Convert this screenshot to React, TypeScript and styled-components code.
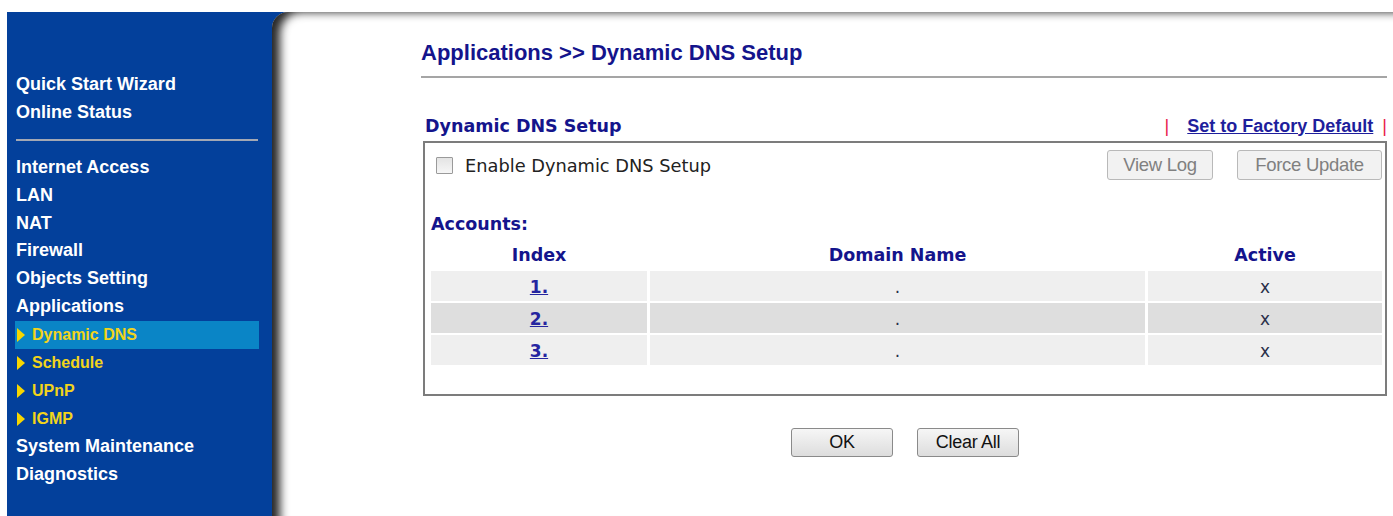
import styled, { createGlobalStyle } from "styled-components";

const GlobalStyle = createGlobalStyle`
  html, body {
    margin: 0;
    padding: 0;
    background: #fff;
  }
  body {
    font-family: "Liberation Sans", Arial, sans-serif;
  }
`;

const Page = styled.div`
  height: 516px;
  box-sizing: border-box;
  padding: 12px 0 0 7px;
  overflow: hidden;
`;

const Frame = styled.div`
  display: flex;
  height: 100%;
  background: #03409b;
`;

const Sidebar = styled.nav`
  width: 265px;
  flex-shrink: 0;
  box-sizing: border-box;
  padding: 59px 13px 0 8px;
  display: flex;
  flex-direction: column;
`;

const MenuItem = styled.div`
  height: 27.9px;
  line-height: 27.9px;
  padding-left: 1px;
  color: #fff;
  font-size: 18px;
  font-weight: bold;
  white-space: nowrap;
`;

const SubItem = styled.div<{ $active?: boolean }>`
  height: 27.9px;
  display: flex;
  align-items: center;
  gap: 7px;
  padding-left: 2px;
  color: #f2d41a;
  font-size: 16px;
  font-weight: bold;
  background: ${(p) => (p.$active ? "#0a85c6" : "transparent")};
`;

const Arrow = styled.span`
  width: 0;
  height: 0;
  border-top: 7px solid transparent;
  border-bottom: 7px solid transparent;
  border-left: 8px solid #f7d600;
`;

const Divider = styled.div`
  height: 2px;
  margin: 12px 1px 13px 1px;
  background: #a3a8b4;
`;

const Content = styled.main`
  flex: 1;
  background: #fff;
  border-top-left-radius: 16px;
  box-shadow: inset 13px 5px 10px -5px rgba(0, 0, 0, 0.85);
  box-sizing: border-box;
  padding: 28px 6px 0 149px;
`;

const Title = styled.h1`
  margin: 0;
  font-size: 22px;
  line-height: 26px;
  font-weight: bold;
  color: #14148c;
`;

const Rule = styled.div`
  height: 2px;
  margin-top: 10px;
  background: #a5a5a5;
`;

const SectionHead = styled.div`
  margin-top: 37px;
  height: 22px;
  display: flex;
  align-items: center;
  justify-content: space-between;
`;

const SectionTitle = styled.span`
  padding-left: 4px;
  font-family: "DejaVu Sans", Verdana, sans-serif;
  font-size: 17.5px;
  font-weight: bold;
  color: #14148c;
`;

const Links = styled.span`
  display: flex;
  align-items: center;
  font-size: 18px;
  font-weight: bold;
`;

const Pipe = styled.span`
  color: #e8174a;
  font-weight: normal;
`;

const Link = styled.a`
  color: #1e1e9c;
  text-decoration: underline;
  margin-left: 18px;
  margin-right: 9px;
`;

const Box = styled.section`
  margin: 4px 0 0 2px;
  border: 2px solid #7c7c7c;
  padding: 7px 3px 29px 6px;
`;

const TopRow = styled.div`
  height: 30px;
  display: flex;
  align-items: center;
`;

const Check = styled.input`
  appearance: none;
  width: 17px;
  height: 17px;
  margin: 0 12px 0 5px;
  border: 1px solid #9a9a9a;
  border-radius: 1px;
  background: linear-gradient(#e4e4e4, #f6f6f6);
  box-sizing: border-box;
`;

const CheckLabel = styled.span`
  flex: 1;
  font-family: "DejaVu Sans", Verdana, sans-serif;
  font-size: 17.8px;
  color: #222;
`;

const GreyButton = styled.button<{ $w: number }>`
  width: ${(p) => p.$w}px;
  height: 30px;
  margin-left: 24px;
  padding: 0;
  border: 1px solid #b9b9b9;
  border-radius: 3px;
  background: #f2f2f2;
  color: #808080;
  font-family: "Liberation Sans", Arial, sans-serif;
  font-size: 18.5px;
  letter-spacing: -0.3px;
`;

const Accounts = styled.div`
  margin-top: 33px;
  height: 22px;
  line-height: 22px;
  font-family: "DejaVu Sans", Verdana, sans-serif;
  font-size: 17.5px;
  font-weight: bold;
  color: #14148c;
`;

const Grid = styled.div`
  margin-top: 6px;
  display: grid;
  grid-template-columns: 216px 495px 1fr;
  column-gap: 3px;
  row-gap: 2px;
  font-family: "DejaVu Sans", Verdana, sans-serif;
  font-size: 17px;
`;

const Head = styled.div`
  height: 28px;
  display: flex;
  align-items: center;
  justify-content: center;
  font-size: 17.5px;
  font-weight: bold;
  color: #14148c;
`;

const Cell = styled.div<{ $dark?: boolean }>`
  height: 30px;
  display: flex;
  align-items: center;
  justify-content: center;
  padding-top: 2px;
  box-sizing: border-box;
  background: ${(p) => (p.$dark ? "#dedede" : "#efefef")};
  color: #2a2f4a;
`;

const IndexLink = styled.a`
  color: #2525a0;
  font-weight: bold;
  text-decoration: underline;
`;

const Actions = styled.div`
  margin: 32px 0 0 2px;
  display: flex;
  justify-content: center;
  gap: 24px;
`;

const FormButton = styled.button`
  width: 102px;
  height: 29px;
  border: 1px solid #8a8a8a;
  border-radius: 3px;
  background: linear-gradient(#f6f6f6, #dddddd);
  color: #111;
  font-family: "Liberation Sans", Arial, sans-serif;
  font-size: 18px;
  letter-spacing: -0.3px;
`;

const mainMenu = ["Internet Access", "LAN", "NAT", "Firewall", "Objects Setting", "Applications"];
const subMenu = ["Dynamic DNS", "Schedule", "UPnP", "IGMP"];
const accounts = ["1.", "2.", "3."];

export default function App() {
  return (
    <Page>
      <GlobalStyle />
      <Frame>
        <Sidebar>
          <MenuItem>Quick Start Wizard</MenuItem>
          <MenuItem>Online Status</MenuItem>
          <Divider />
          {mainMenu.map((m) => (
            <MenuItem key={m}>{m}</MenuItem>
          ))}
          {subMenu.map((s, i) => (
            <SubItem key={s} $active={i === 0}>
              <Arrow />
              {s}
            </SubItem>
          ))}
          <MenuItem>System Maintenance</MenuItem>
          <MenuItem>Diagnostics</MenuItem>
        </Sidebar>

        <Content>
          <Title>Applications &gt;&gt; Dynamic DNS Setup</Title>
          <Rule />

          <SectionHead>
            <SectionTitle>Dynamic DNS Setup</SectionTitle>
            <Links>
              <Pipe>|</Pipe>
              <Link>Set to Factory Default</Link>
              <Pipe>|</Pipe>
            </Links>
          </SectionHead>

          <Box>
            <TopRow>
              <Check type="checkbox" />
              <CheckLabel>Enable Dynamic DNS Setup</CheckLabel>
              <GreyButton $w={106} disabled>View Log</GreyButton>
              <GreyButton $w={145} disabled>Force Update</GreyButton>
            </TopRow>

            <Accounts>Accounts:</Accounts>
            <Grid>
              <Head>Index</Head>
              <Head>Domain Name</Head>
              <Head>Active</Head>
              {accounts.map((a, i) => [
                <Cell key={a + "i"} $dark={i === 1}>
                  <IndexLink>{a}</IndexLink>
                </Cell>,
                <Cell key={a + "d"} $dark={i === 1}>.</Cell>,
                <Cell key={a + "a"} $dark={i === 1}>x</Cell>,
              ])}
            </Grid>
          </Box>

          <Actions>
            <FormButton>OK</FormButton>
            <FormButton>Clear All</FormButton>
          </Actions>
        </Content>
      </Frame>
    </Page>
  );
}
